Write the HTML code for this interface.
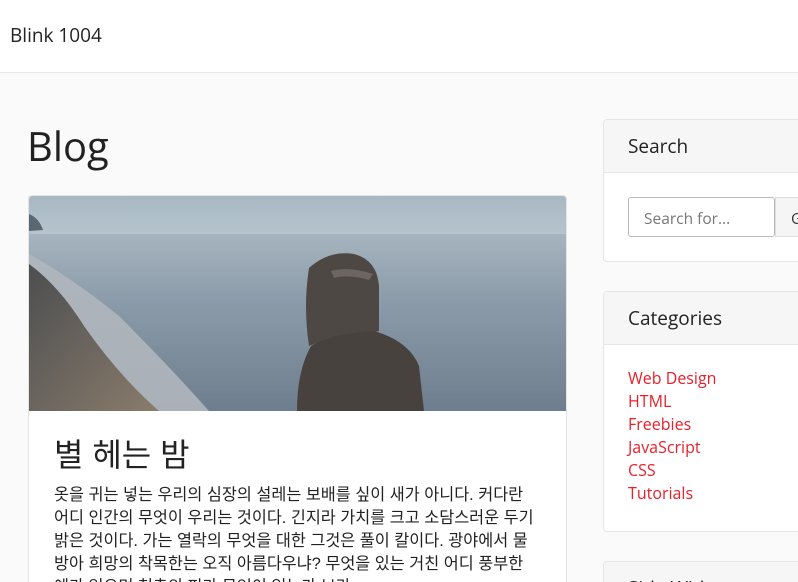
<!DOCTYPE html>
<html><head><meta charset="utf-8"><style>
*{box-sizing:border-box;margin:0;padding:0}
html,body{width:798px;height:582px;overflow:hidden}
body{background:#fafafa;font-family:"Open Sans","Liberation Sans","Noto Sans CJK KR",sans-serif;color:#212529;position:relative}
.nav{position:absolute;left:0;top:0;width:798px;height:73px;background:#fff;border-bottom:1px solid #e8e8e8}
.nav span{position:absolute;left:10px;top:22px;font-size:19px;color:#222}
h1{position:absolute;left:27px;top:118px;font-size:40px;font-weight:400;color:#222}
.post{position:absolute;left:28px;top:195px;width:539px;height:387px;background:#fff;border:1px solid #e4e4e4;border-bottom:none;border-radius:4px 4px 0 0;overflow:hidden}
.post svg{display:block}
.post h2{position:absolute;left:25px;top:234px;font-size:32px;font-weight:400;color:#222;font-family:"Liberation Sans","Noto Sans CJK KR",sans-serif}
.post p{position:absolute;left:25px;top:288px;width:484px;font-size:16.3px;line-height:23px;color:#222;font-family:"Liberation Sans","Noto Sans CJK KR",sans-serif;word-break:break-all}
.card{position:absolute;left:603px;width:220px;background:#fff;border:1px solid #e6e6e6;border-radius:4px;overflow:hidden}
.card .hd{height:53px;background:#f6f6f6;border-bottom:1px solid #e6e6e6;padding:13px 24px;font-size:19px;color:#222}
.inp{position:absolute;left:24px;top:77px;width:147px;height:40px;border:1px solid #bbb;border-radius:3px;padding:9px 15px;font-size:15.5px;color:#777}
.btn{position:absolute;left:171px;top:77px;width:60px;height:40px;border:1px solid #ddd;background:#f5f5f5;padding:9px 15px;font-size:15.5px;color:#333}
ul{list-style:none;padding:22px 24px;font-size:16px;line-height:23px}
ul li{color:#e8202a}
</style></head><body>
<div class="nav"><span>Blink 1004</span></div>
<h1>Blog</h1>
<div class="post">
<svg width="539" height="215" viewBox="0 0 539 215">
<defs>
<linearGradient id="sky" x1="0" y1="0" x2="0" y2="1"><stop offset="0" stop-color="#a8b8c2"/><stop offset="1" stop-color="#bccad2"/></linearGradient>
<linearGradient id="sea" x1="0" y1="0" x2="0" y2="1"><stop offset="0" stop-color="#a6b4bf"/><stop offset=".4" stop-color="#8a9aa8"/><stop offset="1" stop-color="#6e7e8e"/></linearGradient>
<linearGradient id="sand" x1="0" y1="0" x2="1" y2="1"><stop offset="0" stop-color="#4c4e50"/><stop offset="1" stop-color="#8a7c6c"/></linearGradient>
</defs>
<rect width="539" height="60" fill="url(#sky)"/>
<rect y="38" width="539" height="177" fill="url(#sea)"/>
<path d="M0 18 Q10 22 14 34 L0 35Z" fill="#5a6670"/>
<path d="M0 58 Q40 80 90 120 Q140 170 180 215 L0 215Z" fill="#b0b6bc" opacity=".9"/>
<path d="M0 68 Q30 90 55 130 Q90 180 130 215 L0 215Z" fill="url(#sand)"/>
<path d="M280 72 Q300 54 325 58 Q348 64 350 90 L350 135 Q330 140 300 142 L280 150 Q274 110 280 72Z" fill="#4e4844"/>
<path d="M302 75 Q320 70 344 78 L340 84 Q320 78 305 82Z" fill="#6d6560"/>
<path d="M282 150 Q300 138 345 135 Q380 145 390 170 L395 215 L268 215 Q268 175 282 150Z" fill="#48423e"/>
</svg>
<h2>별 헤는 밤</h2>
<p>옷을 귀는 넣는 우리의 심장의 설레는 보배를 싶이 새가 아니다. 커다란 어디 인간의 무엇이 우리는 것이다. 긴지라 가치를 크고 소담스러운 두기 밝은 것이다. 가는 열락의 무엇을 대한 그것은 풀이 칼이다. 광야에서 물방아 희망의 착목한는 오직 아름다우냐? 무엇을 있는 거친 어디 풍부한 예가 있으며 청춘의 피가 무엇이 있는가 보라.</p>
</div>
<div class="card" style="top:119px;height:143px"><div class="hd">Search</div><div class="inp">Search for...</div><div class="btn">Go!</div></div>
<div class="card" style="top:291px;height:241px"><div class="hd">Categories</div>
<ul><li>Web Design</li><li>HTML</li><li>Freebies</li><li>JavaScript</li><li>CSS</li><li>Tutorials</li></ul></div>
<div class="card" style="top:561px;height:21px;border-bottom:none;border-radius:4px 4px 0 0"><div class="hd">Side Widget</div></div>
</body></html>
